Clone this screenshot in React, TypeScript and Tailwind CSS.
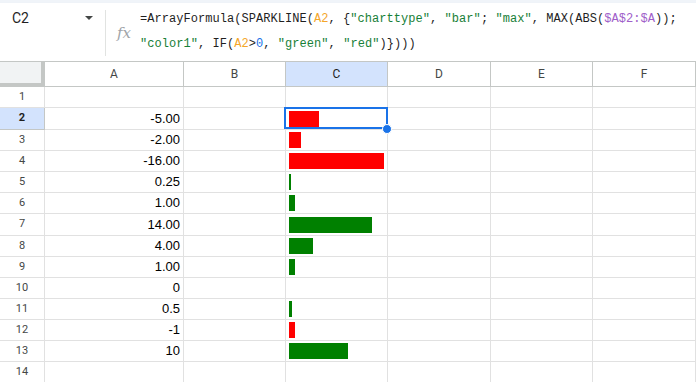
import React from 'react';

// values in column A, rows 2..13
const rows: { label: string; value: number }[] = [
  { label: '-5.00', value: -5 },
  { label: '-2.00', value: -2 },
  { label: '-16.00', value: -16 },
  { label: '0.25', value: 0.25 },
  { label: '1.00', value: 1 },
  { label: '14.00', value: 14 },
  { label: '4.00', value: 4 },
  { label: '1.00', value: 1 },
  { label: '0', value: 0 },
  { label: '0.5', value: 0.5 },
  { label: '-1', value: -1 },
  { label: '10', value: 10 },
];

const maxAbs = 16;
const barSpan = 95;

const heights = [
  'h-[21px]', 'h-[22px]', 'h-[21px]', 'h-[21px]', 'h-[21px]', 'h-[21px]', 'h-[22px]',
  'h-[21px]', 'h-[21px]', 'h-[21px]', 'h-[21px]', 'h-[21px]', 'h-[21px]', 'h-[21px]',
];

const cols = ['A', 'B', 'C', 'D', 'E', 'F'];

const Str = ({ children }: { children: React.ReactNode }) => (
  <span className="text-[#188038]">{children}</span>
);
const Ref = ({ children }: { children: React.ReactNode }) => (
  <span className="text-[#f4a62a]">{children}</span>
);

export default function App() {
  const gridCols = 'grid grid-cols-[45px_139px_102px_102px_103px_102px_103px]';
  return (
    <div className="w-[696px] h-[382px] overflow-hidden bg-white font-['Roboto',sans-serif] text-[#1f1f1f]">
      <div className="h-[3px] bg-[#f0f4f9]" />

      {/* formula bar */}
      <div className="flex h-[59px] border-b border-[#c4c7c5] shadow-[0_1px_2px_rgba(0,0,0,0.08)]">
        <div className="flex w-[105px] h-[30px] items-center justify-between pl-3 pr-[12px] shrink-0">
          <span className="text-[14px]">C2</span>
          <svg width="8" height="4" viewBox="0 0 8 4">
            <path d="M0 0 L8 0 L4 4 Z" fill="#444746" />
          </svg>
        </div>
        <div className="w-px h-[46px] mt-[7px] bg-[#e1e3e1] shrink-0" />
        <div className="w-[34px] shrink-0 pl-[11px] pt-[20px] font-['DejaVu_Serif',serif] italic text-[15px] leading-[20px] text-[#a0a4a8]">
          fx
        </div>
        <div className="pt-[4px] font-['Liberation_Mono',monospace] text-[12px] tracking-[0.05px] leading-[25px] whitespace-pre text-[#1f1f1f]">
          <div>
            =ArrayFormula(SPARKLINE(<Ref>A2</Ref>, {'{'}<Str>"charttype"</Str>, <Str>"bar"</Str>; <Str>"max"</Str>, MAX(ABS(
            <span className="text-[#a05ec9]">$A$2:$A</span>));
          </div>
          <div>
            <Str>"color1"</Str>, IF(<Ref>A2</Ref>&gt;<span className="text-[#1a73e8]">0</span>, <Str>"green"</Str>, <Str>"red"</Str>){'}'})))
          </div>
        </div>
      </div>

      {/* column headers */}
      <div className={`${gridCols} h-[25px] text-[12px] text-[#444746]`}>
        <div className="bg-[#f1f3f4] border-r-4 border-b-4 border-[#c4c7c5]" />
        {cols.map((c) => (
          <div
            key={c}
            className={
              c === 'C'
                ? 'flex items-center justify-center bg-[#d3e3fd] border-r border-b border-[#c4c7c5] text-[#1f1f1f]'
                : 'flex items-center justify-center bg-white border-r border-b border-[#c4c7c5]'
            }
          >
            {c}
          </div>
        ))}
      </div>

      {/* rows */}
      {heights.map((h, i) => {
        const n = i + 1;
        const data = n >= 2 && n <= 13 ? rows[n - 2] : null;
        const selected = n === 2;
        return (
          <div key={n} className={`${gridCols} ${h}`}>
            <div
              className={
                selected
                  ? 'flex items-center justify-center bg-[#d3e3fd] border-r border-b border-[#c4c7c5] text-[11px] font-bold text-[#1f1f1f]'
                  : 'flex items-center justify-center bg-white border-r border-b border-[#e1e1e1] text-[11px] text-[#444746]'
              }
            >
              {n}
            </div>
            <div className="flex items-center justify-end pr-[3px] border-r border-b border-[#e1e1e1] font-['Liberation_Sans',Arial,sans-serif] text-[13px] text-black">
              {data?.label}
            </div>
            <div className="border-r border-b border-[#e1e1e1]" />
            <div className={selected ? 'relative z-10 flex items-center pl-[3px] border-r border-b border-[#e1e1e1]' : 'relative flex items-center pl-[3px] border-r border-b border-[#e1e1e1]'}>
              {data && data.value !== 0 && (
                <div
                  className={data.value < 0 ? 'h-[16px] bg-[#ff0000]' : 'h-[16px] bg-[#008000]'}
                  style={{ width: `${Math.max(2, (Math.abs(data.value) / maxAbs) * barSpan)}px` }}
                />
              )}
              {selected && (
                <>
                  <div className="absolute -left-[2px] -top-[1px] -right-[1px] bottom-0 border-2 border-[#1a73e8]" />
                  <div className="absolute -right-[5px] -bottom-[5px] w-[10px] h-[10px] rounded-full bg-[#1a73e8] border border-white" />
                </>
              )}
            </div>
            <div className="border-r border-b border-[#e1e1e1]" />
            <div className="border-r border-b border-[#e1e1e1]" />
            <div className="border-r border-b border-[#e1e1e1]" />
          </div>
        );
      })}
    </div>
  );
}
